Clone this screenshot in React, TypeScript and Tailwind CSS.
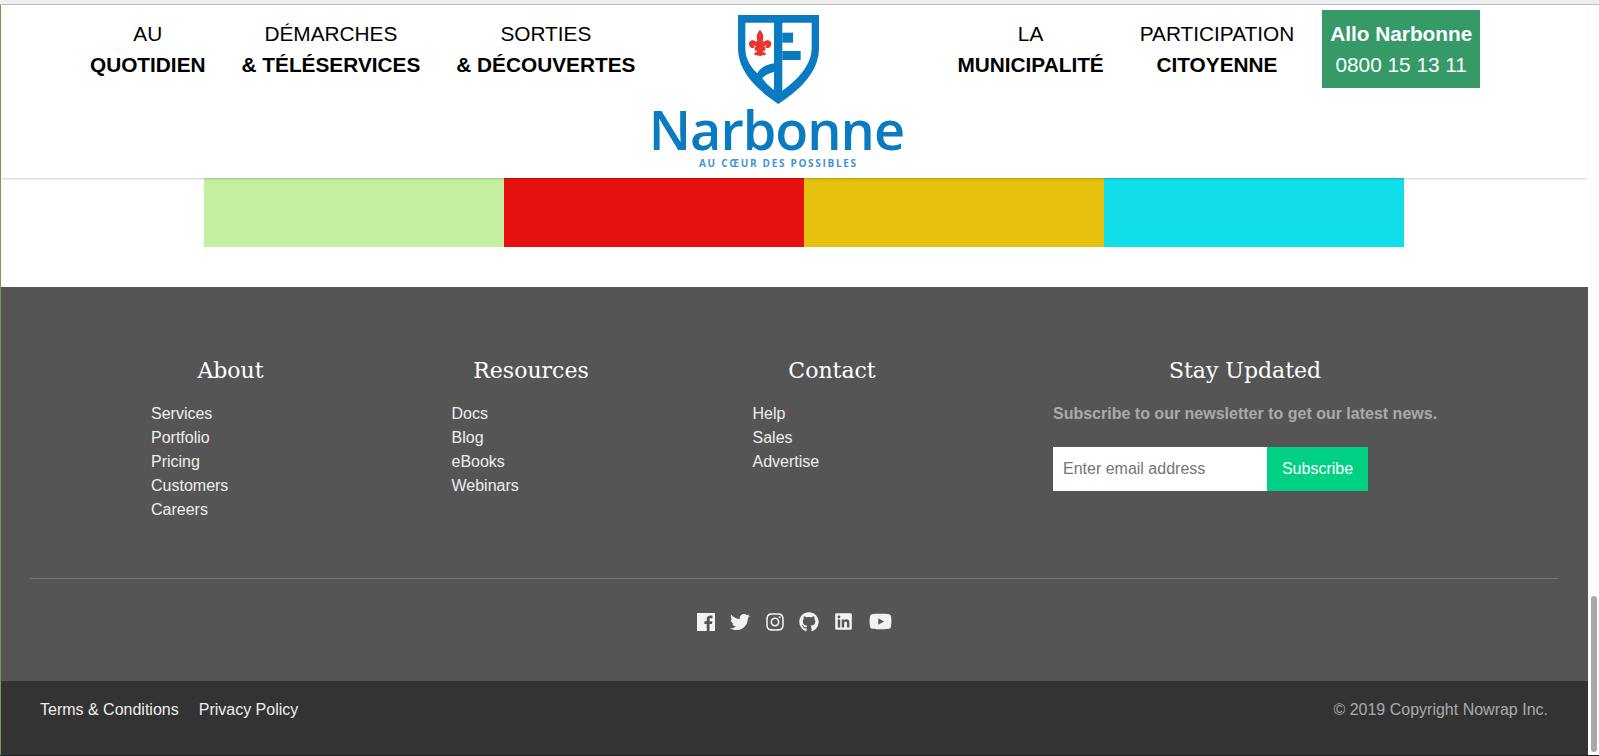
import React from "react";
import { FaTwitter, FaInstagram, FaGithub, FaLinkedin, FaYoutube } from "react-icons/fa";

const sans = "font-['Liberation_Sans',Arial,sans-serif]";

function NavItem({ top, bottom, className = "" }: { top: string; bottom: string; className?: string }) {
  return (
    <a className={`flex flex-col items-center px-[18px] pt-[14px] text-[20.8px] leading-[30.5px] text-black whitespace-nowrap ${className}`}>
      <span>{top}</span>
      <span className="font-bold">{bottom}</span>
    </a>
  );
}

function Shield() {
  return (
    <svg width="81" height="89" viewBox="22 15 243 267" className="block">
      <path fill="#0a7ac1" d="M22 15H265V115C265 190 200 245 143 282C88 245 22 190 22 115Z" />
      <path fill="#fff" d="M44 38H130V160C105 163 88 175 80 190C58 170 44 145 44 115Z" />
      <path fill="#fff" d="M95 205C102 196 115 189 130 186V240C115 230 105 218 95 205Z" />
      <path fill="#fff" d="M155 38H243V115C243 165 200 210 155 242Z" />
      <rect x="155" y="68" width="32" height="30" fill="#0a7ac1" />
      <rect x="155" y="123" width="55" height="27" fill="#0a7ac1" />
      <path
        fill="#e8352e"
        stroke="#e8352e"
        strokeWidth="4"
        strokeLinejoin="round"
        d="M88 62C96 72 99 80 94 92C97 96 98 100 96 104C100 90 120 88 120 102C120 112 110 114 106 110C110 108 110 102 106 102C102 102 100 110 96 114H102V120H94C94 126 98 130 104 132L88 136L72 132C78 130 82 126 82 120H74V114H80C76 110 74 102 70 102C66 102 66 108 70 110C66 114 57 112 57 102C57 88 76 90 80 104C78 100 79 96 82 92C77 80 80 72 88 62Z"
      />
    </svg>
  );
}

function FacebookIcon() {
  return (
    <svg width="18" height="18" viewBox="0 0 18 18" className="block">
      <path fill="#f2f2f2" d="M0 0H18V18H12.6V11H15L15.4 8.2H12.6V6.6C12.6 5.7 13 5.2 14 5.2H15.5V2.7C15 2.6 14.2 2.6 13.4 2.6C11.2 2.6 9.7 3.9 9.7 6.2V8.2H7.4V11H9.7V18H0Z" />
    </svg>
  );
}

function LinkColumn({ title, links, className = "" }: { title: string; links: string[]; className?: string }) {
  return (
    <div className={className}>
      <h3 className="font-['DejaVu_Serif',serif] w-[159px] text-center text-[22px] leading-[30px] text-white">{title}</h3>
      <ul className="mt-4 text-[16px] leading-[24px] text-[#eeeeee]">
        {links.map((l) => (
          <li key={l}>{l}</li>
        ))}
      </ul>
    </div>
  );
}

export default function App() {
  return (
    <div className={`${sans} flex h-[756px] w-[1599px] flex-col overflow-hidden bg-white`}>
      <div className="h-[5px] shrink-0 border-b border-[#bdbdbd] bg-[#efefef]" />
      <div className="flex min-h-0 flex-1">
        <div className="w-px shrink-0 bg-[#6f9f4f]" />
        <main className="flex w-[1587px] shrink-0 flex-col">
          <header className="relative z-10 flex h-[173px] shrink-0 items-start bg-white pl-[71px] shadow-[0_2px_2px_-1px_rgba(0,0,0,0.2)]">
            <NavItem top="AU" bottom="QUOTIDIEN" />
            <NavItem top="DÉMARCHES" bottom="& TÉLÉSERVICES" />
            <NavItem top="SORTIES" bottom="& DÉCOUVERTES" />
            <div className="flex w-[250px] shrink-0 flex-col items-center pt-[10px]">
              <Shield />
              <span className="mr-[4px] mt-[-2px] font-['Open_Sans',sans-serif] text-[54px] font-semibold leading-[54px] tracking-[-1px] text-[#0a7ac1]">
                Narbonne
              </span>
              <span className="mt-[1px] font-['Open_Sans',sans-serif] text-[10px] font-bold leading-[12px] tracking-[1.7px] text-[#3f95d0]">
                AU CŒUR DES POSSIBLES
              </span>
            </div>
            <NavItem top="LA" bottom="MUNICIPALITÉ" className="ml-[36px]" />
            <NavItem top="PARTICIPATION" bottom="CITOYENNE" />
            <div className="ml-[10px] mt-[5px] flex h-[78px] w-[158px] flex-col items-center justify-center bg-[#359a68] text-[20.8px] leading-[31px] text-white">
              <span className="font-bold">Allo Narbonne</span>
              <span>0800 15 13 11</span>
            </div>
          </header>

          <section className="flex h-[109px] shrink-0 items-start pl-[203px]">
            <div className="h-[69px] w-[300px] bg-[#c5f0a4]" />
            <div className="h-[69px] w-[300px] bg-[#e61010]" />
            <div className="h-[69px] w-[300px] bg-[#e6c20e]" />
            <div className="h-[69px] w-[300px] bg-[#10dfeb]" />
          </section>

          <footer className="flex h-[394px] shrink-0 flex-col bg-[#555555] pt-[69px]">
            <div className="flex h-[222px] shrink-0 pl-[150px]">
              <LinkColumn className="w-[300.5px]" title="About" links={["Services", "Portfolio", "Pricing", "Customers", "Careers"]} />
              <LinkColumn className="w-[301px]" title="Resources" links={["Docs", "Blog", "eBooks", "Webinars"]} />
              <LinkColumn className="w-[300.5px]" title="Contact" links={["Help", "Sales", "Advertise"]} />
              <div className="w-[384px]">
                <h3 className="font-['DejaVu_Serif',serif] text-center text-[22px] leading-[30px] text-white">Stay Updated</h3>
                <p className="mt-4 text-[16px] font-bold leading-[24px] text-[#aaaaaa] whitespace-nowrap">
                  Subscribe to our newsletter to get our latest news.
                </p>
                <form className="mt-[21px] flex h-[44px]">
                  <input
                    placeholder="Enter email address"
                    className="h-full w-[214px] bg-white px-[10px] text-[16px] text-black outline-none placeholder:text-[#757575]"
                  />
                  <button type="button" className="h-full w-[101px] bg-[#00d084] text-[16px] text-white">
                    Subscribe
                  </button>
                </form>
              </div>
            </div>
            <div className="ml-[29px] mr-[30px] h-px shrink-0 bg-[#777777]" />
            <div className="flex h-[102px] items-start justify-center pt-[31px] text-[#f2f2f2]">
              <div className="flex items-center pr-px">
                <FacebookIcon />
                <FaTwitter className="ml-[15px] text-[20px]" />
                <FaInstagram className="ml-[15px] text-[20px]" />
                <FaGithub className="ml-[14px] text-[20px]" />
                <FaLinkedin className="ml-[15px] text-[19px]" />
                <FaYoutube className="ml-[16px] text-[23px]" />
              </div>
            </div>
          </footer>

          <div className="flex h-[74px] shrink-0 items-center justify-between bg-[#333333] pb-4 pl-[39px] pr-[40px] text-[16px]">
            <div className="flex gap-5 text-[#eeeeee]">
              <span>Terms &amp; Conditions</span>
              <span>Privacy Policy</span>
            </div>
            <span className="text-[#aaaaaa]">© 2019 Copyright Nowrap Inc.</span>
          </div>
        </main>
        <aside className="flex w-[11px] shrink-0 flex-col justify-end bg-[#fdfdfd] pb-[3px] pl-[3px]">
          <div className="h-[156px] w-[6px] rounded-[3px] bg-[#a8a8a8]" />
        </aside>
      </div>
      <div className="h-px shrink-0 bg-[#222222]" />
    </div>
  );
}
